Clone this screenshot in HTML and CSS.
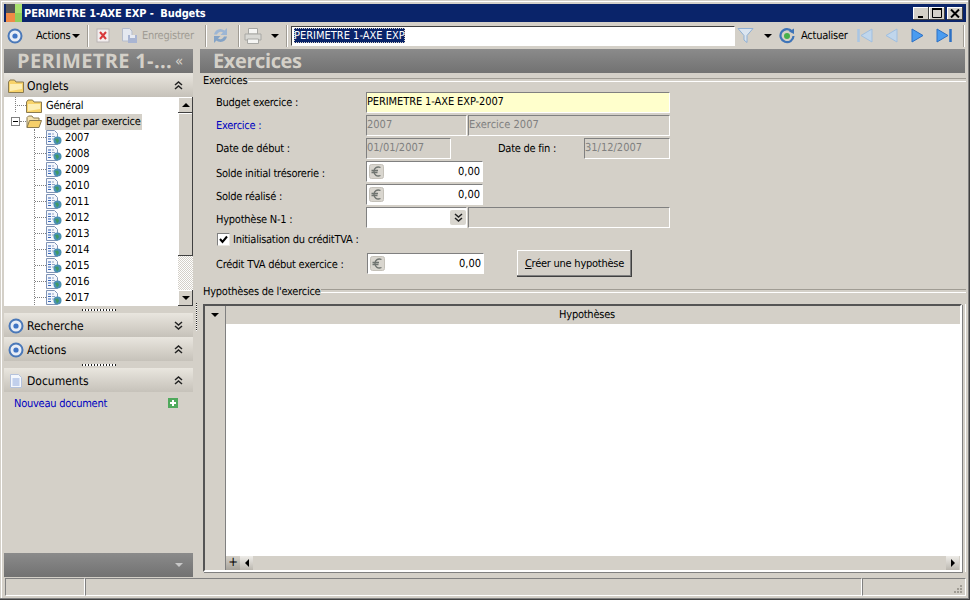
FILE: index.html
```html
<!DOCTYPE html>
<html lang="fr">
<head>
    <meta charset="UTF-8">
    <title>PERIMETRE 1-AXE EXP - Budgets</title>
    <link rel="stylesheet" href="styles.css">
</head>
<body>

    <svg class="defs" width="0" height="0">
        <symbol id="i-target" viewBox="0 0 16 16">
            <circle cx="8" cy="8" r="6.5" fill="#e8edf6" stroke="#4a78b8" stroke-width="2"/>
            <circle cx="8" cy="8" r="2.6" fill="#3f74c4"/>
        </symbol>
        <symbol id="i-folder" viewBox="0 0 16 14">
            <path d="M.5 3V13.500H15.500V3H8L6.500 1H2Z" fill="#f8d36a" stroke="#8a7a50"/>
            <path d="M2 5H14V10L2 12Z" fill="#fdeeb4"/>
        </symbol>
        <symbol id="i-folder-open" viewBox="0 0 16 14">
            <path d="M1 12.500V2.500L2.500 1H6L7.500 3H13V5" fill="#f4e3b0" stroke="#8a7a50"/>
            <path d="M1 12.500L3.500 5.500H15.500L13 12.500Z" fill="#f6cf6a" stroke="#8a7a50"/>
        </symbol>
        <symbol id="i-doc" viewBox="0 0 16 16">
            <path d="M.5 .5H8.500L11.500 3.500V14.500H.5Z" fill="#f4f7fc" stroke="#7f93b5"/>
            <path d="M2 4H5M2 6.500H5M2 9H5M2 11.500H5" stroke="#3564b8"/>
            <path d="M6 4H8M6 6.500H9M6 9H8" stroke="#8fa3c4"/>
            <circle cx="11.500" cy="10.500" r="4" fill="#4a90b4"/>
            <path d="M9 9L12 8.500L13 11L11 13.500L10 11Z" fill="#3f9a62"/>
        </symbol>
        <symbol id="i-euro" viewBox="0 0 15 15">
            <rect x=".5" y=".5" width="14" height="14" rx="2" fill="#d9d6cf" stroke="#c4c1b9"/>
            <path d="M11.500 3.500C8 2 5 4 5 7.500C5 11 8 13 11.500 11.500M2.500 6.500H9M2.500 8.500H8.500" fill="none" stroke="#6f7470" stroke-width="1.300"/>
        </symbol>
        <symbol id="i-up2" viewBox="0 0 9 9">
            <path d="M1 4L4.500 1L8 4M1 8L4.500 5L8 8" fill="none" stroke="#222" stroke-width="1.500"/>
        </symbol>
        <symbol id="i-down2" viewBox="0 0 9 9">
            <path d="M1 1L4.500 4L8 1M1 5L4.500 8L8 5" fill="none" stroke="#222" stroke-width="1.500"/>
        </symbol>
    </svg>

    <div class="window">

        <div class="titlebar">
            <svg class="app-icon" width="16" height="18" viewBox="0 0 16 18">
                <rect width="16" height="18" fill="#a9e06f"/>
                <rect width="9" height="9" fill="#555"/>
                <rect y="9" width="9" height="9" fill="#f08a46"/>
                <rect x="9" y="9" width="7" height="9" fill="#8fce5a"/>
            </svg>
            <span class="title-text">PERIMETRE 1-AXE EXP -&nbsp; Budgets</span>
            <div class="win-buttons">
                <span class="win-btn"><svg width="9" height="9"><path d="M1 7H6V9H1Z" fill="#000"/></svg></span>
                <span class="win-btn"><svg width="11" height="10"><path d="M.5 1.500H9.500V9.500H.5Z" fill="none" stroke="#000"/><path d="M0 1H10" stroke="#000" stroke-width="2"/></svg></span>
                <span class="win-btn win-close"><svg width="10" height="9"><path d="M1 .5L9 8.500M9 .5L1 8.500" stroke="#000" stroke-width="2"/></svg></span>
            </div>
        </div>

        <div class="toolbar">
            <svg class="tb-target" width="16" height="16"><use href="#i-target"/></svg>
            <span class="tb-text tb-actions">Actions</span>
            <span class="arrow tb-actions-arrow"></span>
            <span class="tb-sep sep-a"></span>
            <svg class="tb-cancel" width="14" height="15" viewBox="0 0 14 15">
                <rect x="1" y="1" width="12" height="13" fill="#f3eeee" stroke="#b9b4b4"/>
                <path d="M4 4L10 11M10 4L4 11" stroke="#d8383a" stroke-width="2"/>
            </svg>
            <svg class="tb-save" width="17" height="16" viewBox="0 0 17 16">
                <path d="M1.500 .5H8.500L11 3V13H1.500Z" fill="#e4e8f0" stroke="#b5bccb"/>
                <rect x="7" y="7" width="9" height="8" fill="#a9b5d2"/>
                <rect x="9" y="7" width="5" height="3" fill="#e8ebf2"/>
            </svg>
            <span class="tb-text tb-disabled">Enregistrer</span>
            <span class="tb-sep sep-b"></span>
            <svg class="tb-sync" width="17" height="17" viewBox="0 0 17 17">
                <path d="M2 7.500A6.500 6.500 0 0 1 12.500 3.500L15 1V8H8.500L11 5.500A4 4 0 0 0 5 7.500Z" fill="#9db6d4"/>
                <path d="M15 9.500A6.500 6.500 0 0 1 4.500 13.500L2 16V9H8.500L6 11.500A4 4 0 0 0 12 9.500Z" fill="#84a3c6"/>
            </svg>
            <span class="tb-sep sep-c"></span>
            <svg class="tb-print" width="18" height="16" viewBox="0 0 18 16">
                <path d="M4.500 .5H13.500V6H4.500Z" fill="#f5f5f3" stroke="#a8a8a4"/>
                <path d="M1 6H17V12H1Z" fill="#d8d8d4" stroke="#a8a8a4"/>
                <path d="M3.500 11H14.500V15.500H3.500Z" fill="#f5f5f3" stroke="#a8a8a4"/>
            </svg>
            <span class="arrow tb-print-arrow"></span>
            <span class="tb-sep sep-d"></span>
            <div class="search-box"><span class="search-selected">PERIMETRE 1-AXE EXP</span></div>
            <svg class="tb-funnel" width="17" height="17" viewBox="0 0 17 17">
                <path d="M1 1.500H16L10 8.500V15.500L7 13V8.500Z" fill="#dbe5f0" stroke="#8fb0d4"/>
            </svg>
            <span class="arrow tb-funnel-arrow"></span>
            <svg class="tb-refresh" width="16" height="16" viewBox="0 0 16 16">
                <path d="M13 3.500A6.500 6.500 0 1 0 14.500 8" fill="none" stroke="#3e74b8" stroke-width="2.200"/>
                <path d="M10 3.500L15 .5V6Z" fill="#3e74b8"/>
                <circle cx="8" cy="8" r="3" fill="#46b04a"/>
            </svg>
            <span class="tb-text tb-refresh-text">Actualiser</span>
            <svg class="tb-nav nav-first" width="16" height="15" viewBox="0 0 16 15"><path d="M1.500 1V14" stroke="#a9c6e4" stroke-width="2.500"/><path d="M15 1V14L4 7.500Z" fill="#c0d6ec" stroke="#a0bfe0"/></svg>
            <svg class="tb-nav nav-prev" width="14" height="15" viewBox="0 0 14 15"><path d="M13 1V14L2 7.500Z" fill="#c0d6ec" stroke="#a0bfe0"/></svg>
            <svg class="tb-nav nav-next" width="13" height="15" viewBox="0 0 13 15"><path d="M1 1V14L12 7.500Z" fill="#4a9cf0" stroke="#2c70c4"/></svg>
            <svg class="tb-nav nav-last" width="16" height="15" viewBox="0 0 16 15"><path d="M1 1V14L12 7.500Z" fill="#4a9cf0" stroke="#2c70c4"/><path d="M14.500 1V14" stroke="#2c70c4" stroke-width="2.500"/></svg>
            <span class="tb-sep sep-e"></span>
        </div>

        <div class="main">

            <div class="sidebar">
                <div class="gray-bar side-title">
                    <span class="gray-text">PERIMETRE 1-...</span>
                    <span class="collapse">«</span>
                </div>

                <div class="panel-head">
                    <svg class="head-icon" width="16" height="14"><use href="#i-folder"/></svg>
                    <span>Onglets</span>
                    <svg class="chevron" width="9" height="9"><use href="#i-up2"/></svg>
                </div>

                <div class="tree-wrap">
                    <div class="tree">
                        <div class="node node-general">
                            <span class="stub stub-root"></span>
                            <svg class="tree-folder" width="16" height="14"><use href="#i-folder"/></svg>
                            <span class="node-label">Général</span>
                        </div>
                        <div class="node node-budget">
                            <span class="expander"></span>
                            <span class="stub stub-exp"></span>
                            <svg class="tree-folder" width="16" height="14"><use href="#i-folder-open"/></svg>
                            <span class="node-label node-selected">Budget par exercice</span>
                        </div>
                        <div class="children">
                            <div class="node"><span class="stub"></span><svg width="16" height="16"><use href="#i-doc"/></svg><span class="year">2007</span></div>
                            <div class="node"><span class="stub"></span><svg width="16" height="16"><use href="#i-doc"/></svg><span class="year">2008</span></div>
                            <div class="node"><span class="stub"></span><svg width="16" height="16"><use href="#i-doc"/></svg><span class="year">2009</span></div>
                            <div class="node"><span class="stub"></span><svg width="16" height="16"><use href="#i-doc"/></svg><span class="year">2010</span></div>
                            <div class="node"><span class="stub"></span><svg width="16" height="16"><use href="#i-doc"/></svg><span class="year">2011</span></div>
                            <div class="node"><span class="stub"></span><svg width="16" height="16"><use href="#i-doc"/></svg><span class="year">2012</span></div>
                            <div class="node"><span class="stub"></span><svg width="16" height="16"><use href="#i-doc"/></svg><span class="year">2013</span></div>
                            <div class="node"><span class="stub"></span><svg width="16" height="16"><use href="#i-doc"/></svg><span class="year">2014</span></div>
                            <div class="node"><span class="stub"></span><svg width="16" height="16"><use href="#i-doc"/></svg><span class="year">2015</span></div>
                            <div class="node"><span class="stub"></span><svg width="16" height="16"><use href="#i-doc"/></svg><span class="year">2016</span></div>
                            <div class="node"><span class="stub"></span><svg width="16" height="16"><use href="#i-doc"/></svg><span class="year">2017</span></div>
                        </div>
                    </div>
                    <div class="vscroll">
                        <span class="sb-btn"><span class="tri-up"></span></span>
                        <span class="sb-thumb"></span>
                        <span class="sb-track"></span>
                        <span class="sb-btn"><span class="tri-down"></span></span>
                    </div>
                </div>

                <div class="grip-row"><span class="grip"></span></div>

                <div class="panel-head">
                    <svg class="head-icon" width="16" height="16"><use href="#i-target"/></svg>
                    <span>Recherche</span>
                    <svg class="chevron" width="9" height="9"><use href="#i-down2"/></svg>
                </div>
                <div class="panel-head">
                    <svg class="head-icon" width="16" height="16"><use href="#i-target"/></svg>
                    <span>Actions</span>
                    <svg class="chevron" width="9" height="9"><use href="#i-up2"/></svg>
                </div>

                <div class="grip-row"><span class="grip"></span></div>

                <div class="panel-head">
                    <svg class="head-icon" width="16" height="16" viewBox="0 0 16 16">
                        <path d="M2.500 1.500H10.500L13.500 4.500V14.500H2.500Z" fill="#f4f7fc" stroke="#b4c2dc"/>
                        <path d="M4.500 6H11.500M4.500 8H11.500M4.500 10H11.500M4.500 12H11.500" stroke="#8ea8dc"/>
                    </svg>
                    <span>Documents</span>
                    <svg class="chevron" width="9" height="9"><use href="#i-up2"/></svg>
                </div>

                <div class="docs">
                    <span class="link">Nouveau document</span>
                    <svg class="add-icon" width="10" height="10" viewBox="0 0 10 10">
                        <rect width="10" height="10" fill="#4fa95c"/>
                        <path d="M5 2V8M2 5H8" stroke="#fff" stroke-width="2"/>
                    </svg>
                </div>

                <div class="gray-bar side-foot"><span class="foot-arrow"></span></div>
            </div>

            <div class="vsplit"><span class="vgrip"></span></div>

            <div class="content">
                <div class="gray-bar content-title">
                    <span class="gray-text">Exercices</span>
                </div>

                <div class="legend legend-top"><span>Exercices</span></div>

                <div class="form">
                    <div class="row">
                        <label>Budget exercice :</label>
                        <div class="field field-yellow w304">PERIMETRE 1-AXE EXP-2007</div>
                    </div>
                    <div class="row">
                        <label class="label-blue">Exercice :</label>
                        <div class="field field-off w100">2007</div>
                        <div class="field field-off w202 ml2">Exercice 2007</div>
                    </div>
                    <div class="row">
                        <label>Date de début :</label>
                        <div class="field field-off w85">01/01/2007</div>
                        <label class="label-end">Date de fin :</label>
                        <div class="field field-off w86">31/12/2007</div>
                    </div>
                    <div class="row row-low">
                        <label>Solde initial trésorerie :</label>
                        <div class="field money w117">
                            <svg width="15" height="15"><use href="#i-euro"/></svg>
                            <span>0,00</span>
                        </div>
                    </div>
                    <div class="row row-low">
                        <label>Solde réalisé :</label>
                        <div class="field money w117">
                            <svg width="15" height="15"><use href="#i-euro"/></svg>
                            <span>0,00</span>
                        </div>
                    </div>
                    <div class="row row-low">
                        <label>Hypothèse N-1 :</label>
                        <div class="field field-combo w100">
                            <span class="combo-btn"><svg width="9" height="9"><use href="#i-down2"/></svg></span>
                        </div>
                        <div class="field field-off w202 ml2"></div>
                    </div>
                    <div class="row-check">
                        <span class="checkbox">
                            <svg width="9" height="9"><path d="M1 4L3.500 7L8 1.500" fill="none" stroke="#000" stroke-width="2"/></svg>
                        </span>
                        <span>Initialisation du créditTVA :</span>
                    </div>
                    <div class="row row-tva">
                        <label>Crédit TVA début exercice :</label>
                        <div class="field money w117">
                            <svg width="15" height="15"><use href="#i-euro"/></svg>
                            <span>0,00</span>
                        </div>
                        <button class="btn"><u>C</u>réer une hypothèse</button>
                    </div>
                </div>

                <div class="legend legend-grid"><span>Hypothèses de l'exercice</span></div>

                <div class="grid-frame">
                    <div class="grid">
                        <div class="grid-side">
                            <div class="corner"><span class="tri-down"></span></div>
                        </div>
                        <div class="grid-main">
                            <div class="grid-head">Hypothèses</div>
                            <div class="grid-body"></div>
                            <div class="hscroll">
                                <span class="plus">+</span>
                                <span class="hs-btn"><span class="tri-left"></span></span>
                                <span class="hs-btn hs-right"><span class="tri-right"></span></span>
                            </div>
                        </div>
                    </div>
                </div>
            </div>

        </div>

        <div class="statusbar">
            <div class="status-cell cell-a"></div>
            <div class="status-cell cell-b"></div>
            <div class="status-cell cell-c">
                <svg class="resize-grip" width="11" height="11" viewBox="0 0 11 11">
                    <path d="M8 1h2v2H8zM5 4h2v2H5zM8 4h2v2H8zM2 7h2v2H2zM5 7h2v2H5zM8 7h2v2H8z" fill="#a09c94"/>
                </svg>
            </div>
        </div>

    </div>

</body>
</html>
```
FILE: styles.css
```css
*{
    box-sizing: border-box;
}

body{
    margin: 0;
    overflow: hidden;
    background-color: #d4d0c8;
    font-family: "DejaVu Sans Condensed", "DejaVu Sans", sans-serif;
    font-size: 11px;
    letter-spacing: -.25px;
    text-rendering: geometricPrecision;
    color: #000;
}

svg{
    flex-shrink: 0;
    display: block;
}
.defs{
    position: absolute;
}

.window{
    width: 970px;
    height: 600px;
    padding: 4px;
    display: flex;
    flex-direction: column;
    background-color: #d4d0c8;
    box-shadow: inset -1px -1px 0 #404040, inset -2px -2px 0 #808080, inset 1px 1px 0 #d4d0c8, inset 2px 2px 0 #fff;
}

/* title bar */
.titlebar{
    height: 18px;
    display: flex;
    align-items: center;
    background-color: #0a246a;
    color: #fff;
    font-weight: bold;
    letter-spacing: -.12px;
    flex-shrink: 0;
}
.app-icon{
    margin-left: 2px;
    margin-right: 2px;
}
.win-buttons{
    margin-left: auto;
    margin-right: 3px;
    display: flex;
}
.win-btn{
    width: 16px;
    height: 13px;
    display: flex;
    align-items: center;
    justify-content: center;
    background-color: #d4d0c8;
    box-shadow: inset -1px -1px 0 #404040, inset 1px 1px 0 #fff;
}
.win-close{
    margin-left: 2px;
}

/* toolbar */
.toolbar{
    height: 27px;
    display: flex;
    align-items: center;
    flex-shrink: 0;
}
.tb-text{
    white-space: nowrap;
}
.tb-target{ margin-left: 3px; }
.tb-actions{
    width: 36px;
    margin-left: 13px;
}
.arrow{
    width: 0;
    height: 0;
    border-left: 4px solid transparent;
    border-right: 4px solid transparent;
    border-top: 4px solid #000;
}
.tb-actions-arrow{ margin-left: 0; }
.tb-sep{
    width: 2px;
    height: 22px;
    border-left: 1px solid #a09c94;
    border-right: 1px solid #fff;
}
.sep-a{ margin-left: 7px; }
.tb-cancel{ margin-left: 7px; }
.tb-save{ margin-left: 11px; }
.tb-disabled{
    width: 54px;
    margin-left: 4px;
    color: #a09c94;
}
.sep-b{ margin-left: 9px; }
.tb-sync{ margin-left: 5px; }
.sep-c{ margin-left: 9px; }
.tb-print{ margin-left: 4px; }
.tb-print-arrow{ margin-left: 9px; }
.sep-d{ margin-left: 7px; }
.search-box{
    width: 444px;
    height: 20px;
    margin-left: 3px;
    padding: 1px 1px 1px 2px;
    background-color: #fff;
    border: 1px solid;
    border-color: #404040 #fff #fff #404040;
    line-height: 15px;
    letter-spacing: 0;
    white-space: nowrap;
}
.search-selected{
    display: inline-block;
    background-color: #0a246a;
    color: #fff;
    outline: 1px dotted #d4d0c8;
    outline-offset: -1px;
}
.tb-funnel{ margin-left: 2px; }
.tb-funnel-arrow{ margin-left: 10px; }
.tb-refresh{ margin-left: 7px; }
.tb-refresh-text{
    width: 47px;
    margin-left: 6px;
}
.nav-first{ margin-left: 9px; }
.nav-prev{ margin-left: 11px; }
.nav-next{ margin-left: 13px; }
.nav-last{ margin-left: 12px; }
.sep-e{ margin-left: 11px; }

/* layout */
.main{
    flex: 1;
    min-height: 0;
    display: flex;
}
.sidebar{
    width: 189px;
    display: flex;
    flex-direction: column;
    flex-shrink: 0;
}
.vsplit{
    width: 7px;
    flex-shrink: 0;
    padding-top: 254px;
    padding-left: 3px;
}
.vgrip{
    display: block;
    width: 1px;
    height: 28px;
    background-image: linear-gradient(#222 50%, #fff 50%);
    background-size: 1px 2px;
}
.content{
    flex: 1;
    min-width: 0;
    display: flex;
    flex-direction: column;
}

.gray-bar{
    height: 24px;
    flex-shrink: 0;
    display: flex;
    align-items: center;
    background-image: linear-gradient(#8b8b8b, #7e7e7e 50%, #727272);
}
.gray-text{
    font-family: "Open Sans", "DejaVu Sans", sans-serif;
    font-size: 20px;
    line-height: 24px;
    font-weight: bold;
    color: #d4d0c8;
    white-space: nowrap;
}
.side-title{
    padding-left: 13px;
}
.side-title .gray-text{
    letter-spacing: .35px;
}
.collapse{
    margin-left: 3px;
    font-size: 15px;
    line-height: 24px;
    color: #d4d0c8;
}
.content-title{
    padding-left: 13px;
    margin-right: 1px;
}
.content-title .gray-text{
    letter-spacing: -.4px;
}

/* sidebar panels */
.panel-head{
    height: 24px;
    flex-shrink: 0;
    display: flex;
    align-items: center;
    gap: 3px;
    padding-left: 4px;
    padding-top: 1px;
    font-size: 12px;
    letter-spacing: 0;
    background-image: linear-gradient(#e9e6df, #d4d0c8 60%, #c6c2ba);
}
.chevron{
    margin-left: auto;
    margin-right: 10px;
}

.tree-wrap{
    height: 209px;
    flex-shrink: 0;
    display: flex;
}
.tree{
    flex: 1;
    min-width: 0;
    overflow: hidden;
    background-color: #fff;
}
.node{
    height: 16px;
    display: flex;
    align-items: center;
    white-space: nowrap;
    padding-top: 1px;
}
.stub{
    width: 12px;
    height: 0;
    border-top: 1px dotted #808080;
}
.node-general{
    padding-left: 11px;
    background-image: linear-gradient(#808080 50%, transparent 50%);
    background-size: 1px 2px;
    background-repeat: repeat-y;
    background-position: 11px 8px;
}
.stub-root{
    width: 11px;
}
.node-budget{
    padding-left: 7px;
}
.expander{
    width: 9px;
    height: 9px;
    flex-shrink: 0;
    border: 1px solid #808080;
    background-image: linear-gradient(#000, #000);
    background-size: 5px 1px;
    background-repeat: no-repeat;
    background-position: center;
}
.stub-exp{
    width: 6px;
}
.tree-folder{
    margin-right: 3px;
}
.node-label{
    padding: 0 1px;
    line-height: 16px;
}
.node-selected{
    background-color: #d4d0c8;
}
.children{
    margin-left: 30px;
    border-left: 1px dotted #808080;
}
.children .stub{
    width: 11px;
}
.year{
    margin-left: 3px;
}

.vscroll{
    width: 15px;
    flex-shrink: 0;
    display: flex;
    flex-direction: column;
}
.sb-btn{
    height: 16px;
    flex-shrink: 0;
    display: flex;
    align-items: center;
    justify-content: center;
    background-color: #d4d0c8;
    box-shadow: inset -1px -1px 0 #404040, inset 1px 1px 0 #fff;
}
.sb-thumb{
    height: 143px;
    background-color: #d4d0c8;
    box-shadow: inset -1px -1px 0 #404040, inset 1px 1px 0 #fff;
}
.sb-track{
    flex: 1;
    background-image: conic-gradient(#fff 25%, #d4d0c8 0 50%, #fff 0 75%, #d4d0c8 0);
    background-size: 2px 2px;
}
.tri-up{
    width: 0;
    height: 0;
    border-left: 4px solid transparent;
    border-right: 4px solid transparent;
    border-bottom: 4px solid #000;
}
.tri-down{
    width: 0;
    height: 0;
    border-left: 4px solid transparent;
    border-right: 4px solid transparent;
    border-top: 4px solid #000;
}
.tri-left{
    width: 0;
    height: 0;
    border-top: 4px solid transparent;
    border-bottom: 4px solid transparent;
    border-right: 4px solid #000;
}
.tri-right{
    width: 0;
    height: 0;
    border-top: 4px solid transparent;
    border-bottom: 4px solid transparent;
    border-left: 4px solid #000;
}

.grip-row{
    height: 7px;
    flex-shrink: 0;
    display: flex;
    align-items: center;
    justify-content: center;
}
.grip{
    width: 34px;
    height: 2px;
    background-image: linear-gradient(90deg, #222 50%, #fff 50%);
    background-size: 3px 2px;
}

.docs{
    flex: 1;
    display: flex;
    align-items: flex-start;
    padding: 5px 15px 0 10px;
}
.link{
    color: #0000c0;
}
.add-icon{
    margin-left: auto;
    margin-top: 1px;
}
.side-foot{
    justify-content: flex-end;
    padding-right: 10px;
}
.foot-arrow{
    width: 0;
    height: 0;
    border-left: 4px solid transparent;
    border-right: 4px solid transparent;
    border-top: 4px solid #c8c8c8;
}

/* form */
.legend{
    display: flex;
    align-items: center;
    gap: 1px;
    padding-left: 3px;
    height: 14px;
    flex-shrink: 0;
}
.legend::after{
    content: "";
    flex: 1;
    height: 2px;
    border-top: 1px solid #a09c94;
    border-bottom: 1px solid #fff;
}
.form{
    padding: 5px 0 0 16px;
    display: flex;
    flex-direction: column;
    gap: 2px;
    flex-shrink: 0;
}
.row{
    height: 21px;
    display: flex;
    align-items: center;
}
.row label{
    width: 150px;
    flex-shrink: 0;
}
.row-low label{
    padding-top: 3px;
}
.row .label-blue{
    color: #0000c0;
}
.row .label-end{
    width: 86px;
    margin-left: 47px;
}
.field{
    height: 21px;
    padding: 2px 0;
    flex-shrink: 0;
    border: 1px solid;
    border-color: #808080 #fff #fff #808080;
    line-height: 14px;
    letter-spacing: 0;
    white-space: nowrap;
}
.field-yellow{
    background-color: #ffffcc;
    letter-spacing: -.1px;
}
.field-off{ color: #808080; }
.field-combo{
    background-color: #fff;
    display: flex;
    justify-content: flex-end;
    padding: 2px 0 2px 0;
}
.combo-btn{
    width: 16px;
    height: 15px;
    display: flex;
    align-items: center;
    justify-content: center;
    background-color: #d9d6cf;
    border-radius: 2px;
}
.money{
    display: flex;
    align-items: center;
    justify-content: space-between;
    background-color: #fff;
    padding: 0 2px 0 2px;
}
.w304{ width: 304px; }
.w202{ width: 202px; }
.w117{ width: 117px; }
.w100{ width: 101px; }
.w85{ width: 85px; }
.w86{ width: 86px; }
.ml2{ margin-left: 1px; }

.row-check{
    height: 18px;
    padding-left: 1px;
    display: flex;
    align-items: center;
    gap: 3px;
}
.checkbox{
    width: 13px;
    height: 13px;
    display: flex;
    align-items: center;
    justify-content: center;
    background-color: #fff;
    border: 1px solid;
    border-color: #808080 #e8e6e0 #e8e6e0 #808080;
}
.row-tva{
    margin-top: 3px;
}
.row-tva label{
    padding-top: 1px;
}
.row-tva .money{
    margin-left: 1px;
}
.btn{
    width: 115px;
    height: 27px;
    margin-left: 33px;
    padding: 0;
    font: inherit;
    letter-spacing: inherit;
    background-color: #d4d0c8;
    border: none;
    box-shadow: inset -1px -1px 0 #404040, inset -2px -2px 0 #808080, inset 1px 1px 0 #fff;
}
.legend-grid{
    margin-top: 10px;
}

/* grid */
.grid-frame{
    flex: 1;
    min-height: 0;
    margin: 6px 0 5px 3px;
    padding-right: 3px;
    border-right: 1px solid #fff;
}
.grid{
    height: 100%;
    display: flex;
    border: 2px solid;
    border-color: #555 #fff #fff #555;
    box-shadow: 1px 1px 0 #808080;
}
.grid-side{
    width: 21px;
    flex-shrink: 0;
    display: flex;
    flex-direction: column;
    border-right: 1px solid #808080;
}
.corner{
    height: 18px;
    display: flex;
    align-items: center;
    justify-content: center;
}
.grid-main{
    flex: 1;
    min-width: 0;
    display: flex;
    flex-direction: column;
}
.grid-head{
    height: 18px;
    padding-right: 12px;
    line-height: 18px;
    text-align: center;
    background-color: #d4d0c8;
}
.grid-body{
    flex: 1;
    background-color: #fff;
}
.hscroll{
    height: 14px;
    display: flex;
    background-color: #d4d0c8;
    padding-right: 1px;
}
.plus{
    width: 14px;
    text-align: center;
    line-height: 13px;
    font-size: 13px;
    background-image: linear-gradient(#d4d0c8, #a8a49c);
}
.hs-btn{
    width: 13px;
    display: flex;
    align-items: center;
    justify-content: center;
    background-image: linear-gradient(#eeece8, #bbb7af);
}
.hs-right{
    margin-left: auto;
}

/* status bar */
.statusbar{
    height: 18px;
    flex-shrink: 0;
    margin-top: 1px;
    display: flex;
}
.status-cell{
    height: 18px;
    border: 1px solid;
    border-color: #808080 #fff #fff #808080;
}
.cell-a{ width: 80px; margin-left: 1px; }
.cell-b{ width: 777px; }
.cell-c{
    flex: 1;
    display: flex;
    justify-content: flex-end;
    align-items: flex-end;
}
.resize-grip{
    margin-right: 2px;
}
```
